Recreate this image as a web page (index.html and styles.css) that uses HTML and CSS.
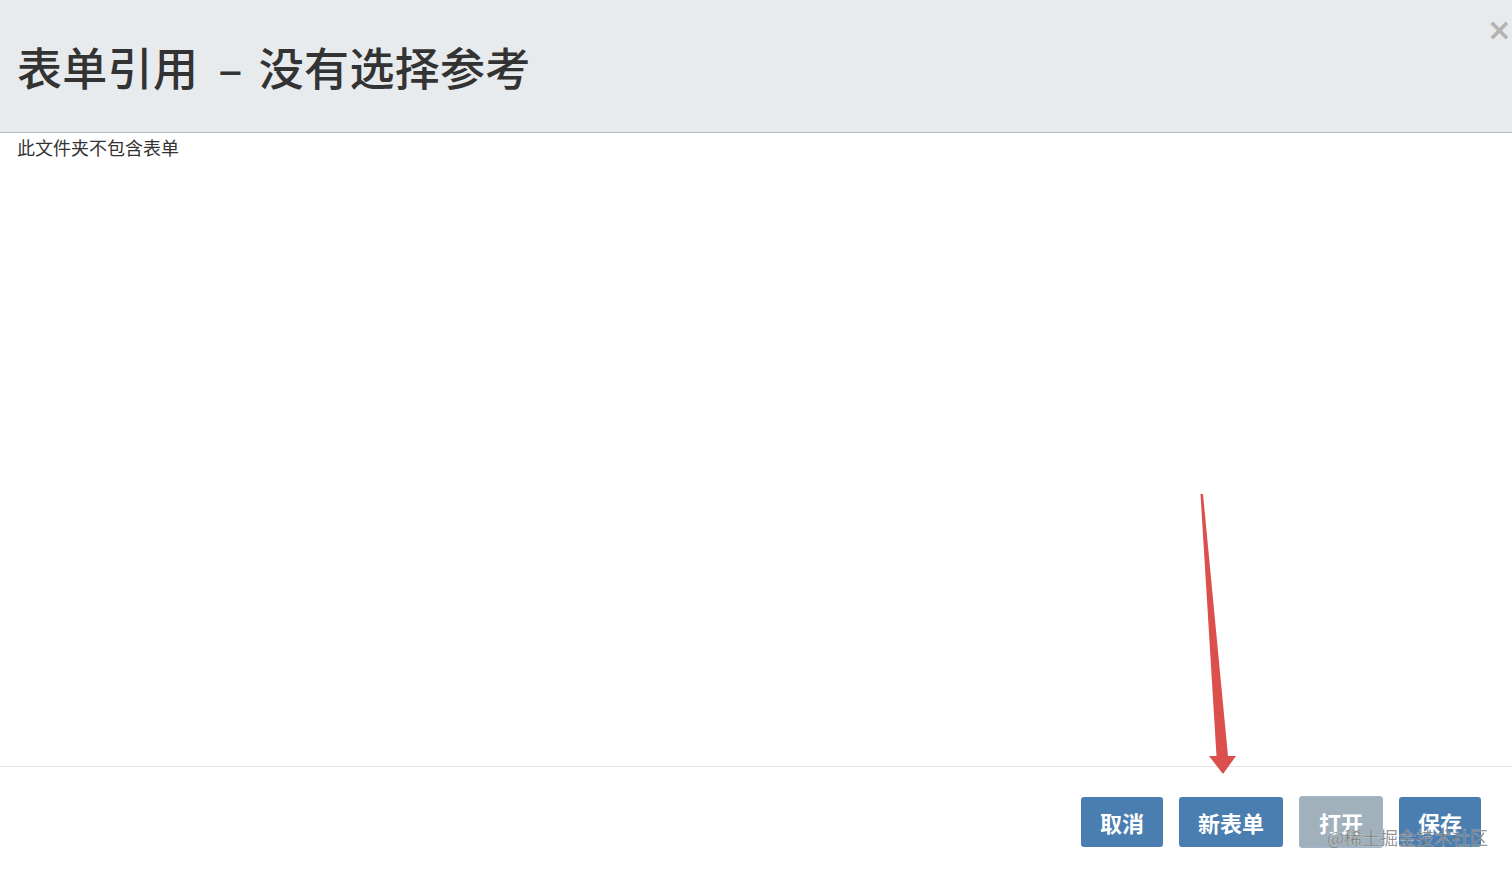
FILE: index.html
```html
<!DOCTYPE html>
<html lang="zh">
<head>
<meta charset="utf-8">
<title>表单引用</title>
<link rel="stylesheet" href="styles.css">
</head>
<body>
<div class="dialog">
  <div class="header">
    <h1 class="title">表单引用<span class="dash">–</span>没有选择参考</h1>
    <span class="close">×</span>
  </div>
  <div class="content">
    <p class="empty">此文件夹不包含表单</p>
  </div>
  <div class="footer">
    <button class="btn">取消</button>
    <button class="btn">新表单</button>
    <button class="btn btn-disabled">打开</button>
    <button class="btn">保存</button>
  </div>
  <svg class="arrow" width="1512" height="871" viewBox="0 0 1512 871">
    <polygon points="1200.5,494 1203,494 1228,756 1236,756 1223,774 1209,756 1216.5,756" fill="#db4f4c"/>
  </svg>
  <span class="watermark">@稀土掘金技术社区</span>
</div>
</body>
</html>
```

FILE: styles.css
```css
html, body {
  margin: 0;
  padding: 0;
  background: #ffffff;
}
body {
  font-family: "Noto Sans CJK SC", "Noto Sans", sans-serif;
  color: #333333;
}
.dialog {
  position: relative;
  width: 1512px;
  height: 871px;
  overflow: hidden;
  display: flex;
  flex-direction: column;
}
.header {
  position: relative;
  height: 132px;
  background: #e8ebee;
  border-bottom: 1px solid #b4b8bc;
  box-sizing: content-box;
}
.title {
  margin: 0;
  padding: 38px 0 0 17px;
  font-size: 45px;
  line-height: 58px;
  font-weight: 500;
  color: #333333;
  letter-spacing: 0.3px;
}
.dash {
  display: inline-block;
  margin: 0 16px 0 20px;
}
.close {
  position: absolute;
  top: 10px;
  right: 0px;
  font-family: "DejaVu Sans", sans-serif;
  font-size: 30px;
  font-weight: bold;
  line-height: 40px;
  color: #b3b3b3;
}
.content {
  height: 633px;
}
.empty {
  margin: 0;
  padding: 1px 17px;
  font-size: 18px;
  line-height: 26px;
  color: #333333;
}
.footer {
  flex: 1;
  border-top: 1px solid #e3e3e3;
  display: flex;
  justify-content: flex-end;
  align-items: flex-start;
  gap: 16px;
  padding: 30px 31px 0 0;
}
.btn {
  height: 50px;
  padding: 0 19px;
  border: none;
  border-radius: 3px;
  background: #4a7eb1;
  color: #ffffff;
  font-family: "Noto Sans CJK SC", sans-serif;
  font-size: 22px;
  font-weight: 600;
  line-height: 50px;
}
.btn-disabled {
  height: 52px;
  margin-top: -1px;
  padding: 0 19px;
  background: #a1b1bc;
  border: 1px solid #9fb6ce;
  line-height: 50px;
}
.arrow {
  position: absolute;
  left: 0;
  top: 0;
  pointer-events: none;
}
.watermark {
  position: absolute;
  left: 1327px;
  top: 824px;
  font-family: "Noto Sans CJK SC", sans-serif;
  font-size: 18px;
  line-height: 26px;
  color: rgba(110, 110, 110, 0.9);
  -webkit-text-stroke: 0.3px rgba(255, 255, 255, 0.6);
}
```
